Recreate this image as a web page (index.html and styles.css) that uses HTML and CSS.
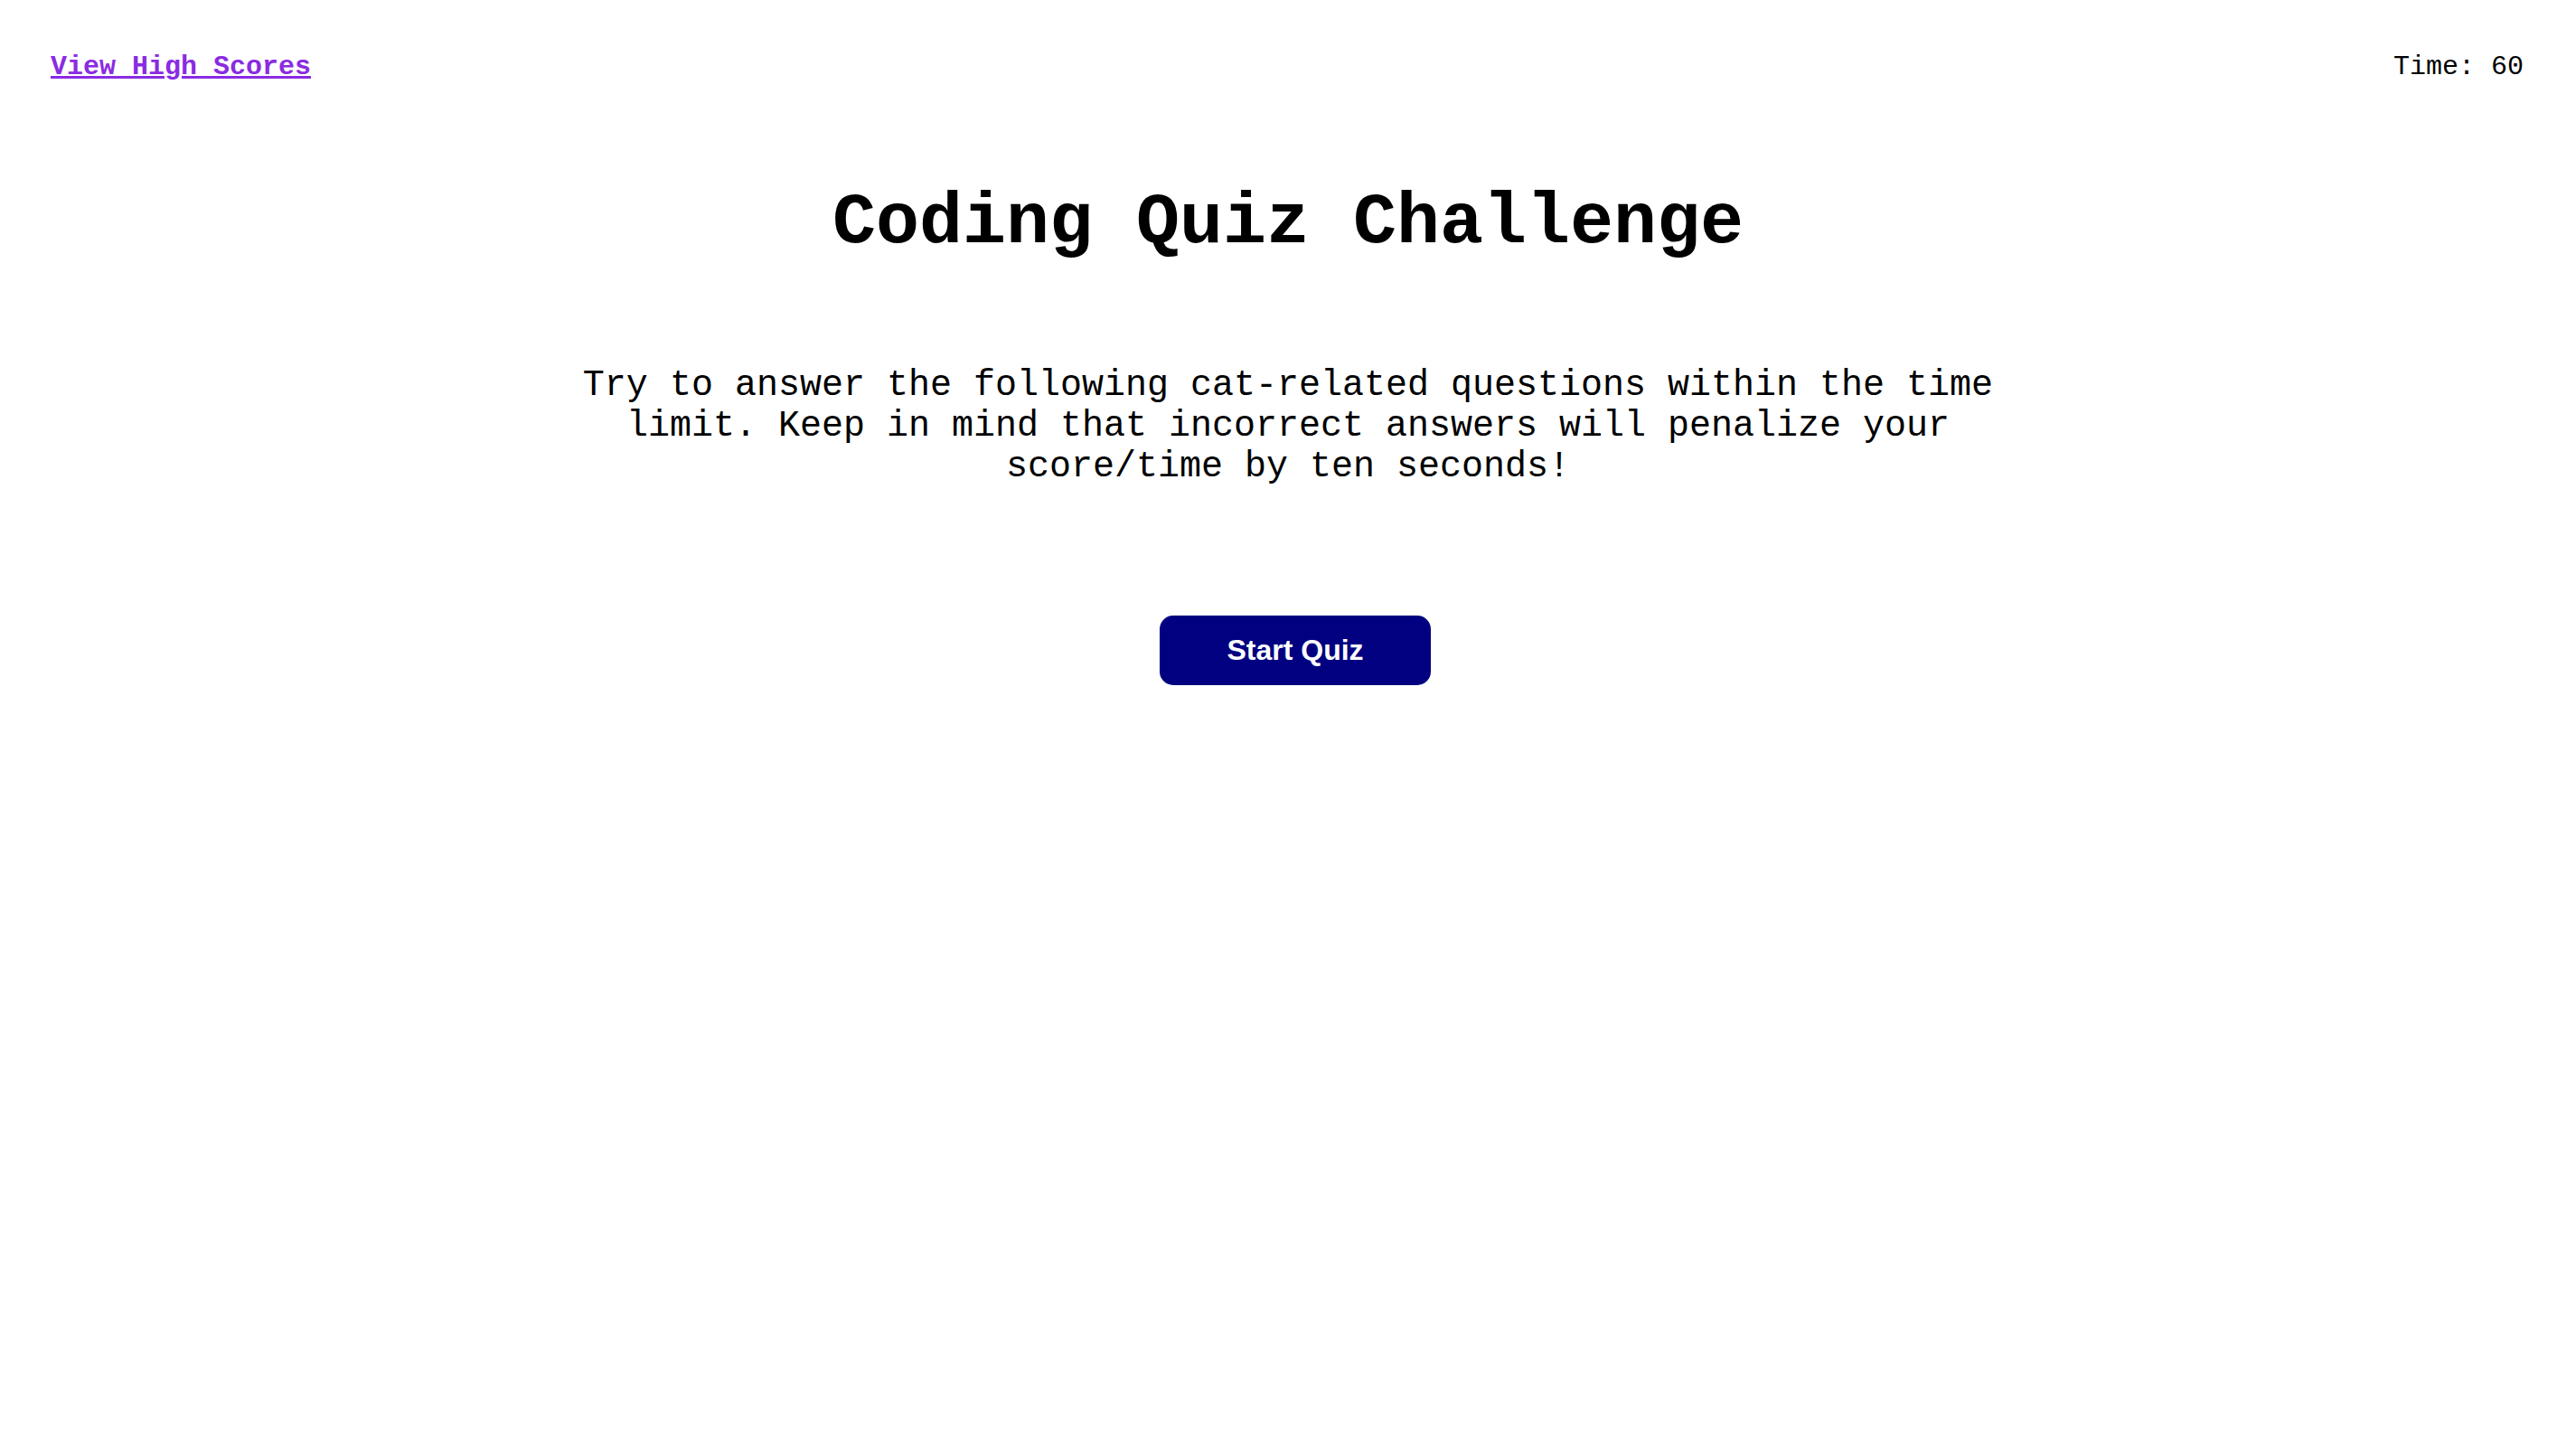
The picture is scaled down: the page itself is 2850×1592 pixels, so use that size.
FILE: index.html
```html
<!DOCTYPE html>
<html lang="en">
<head>
<meta charset="utf-8">
<title>Coding Quiz Challenge</title>
<link rel="stylesheet" href="styles.css">
</head>
<body>
<header class="top-bar">
  <a class="scores-link" href="#">View High Scores</a>
  <div class="timer">Time: 60</div>
</header>
<main class="intro">
  <h1 class="title">Coding Quiz Challenge</h1>
  <p class="description">Try to answer the following cat-related questions within the time limit. Keep in mind that incorrect answers will penalize your score/time by ten seconds!</p>
  <button class="start-btn" type="button">Start Quiz</button>
</main>
</body>
</html>
```

FILE: styles.css
```css
html, body {
  margin: 0;
  padding: 0;
  background: #ffffff;
}

body {
  font-family: "Liberation Mono", "Courier New", monospace;
  color: #000000;
}

.top-bar {
  display: flex;
  justify-content: space-between;
  align-items: flex-start;
  padding: 57px 58px 0 56px;
  font-size: 30px;
}

.scores-link {
  color: #8a2be2;
  font-weight: bold;
  text-decoration: underline;
}

.timer {
  color: #000000;
}

.intro {
  display: flex;
  flex-direction: column;
  align-items: center;
}

.title {
  margin: 110px 0 0 0;
  font-size: 80px;
  font-weight: bold;
  line-height: normal;
}

.description {
  margin: 112px 0 0 0;
  width: 1620px;
  font-size: 40px;
  line-height: 45px;
  text-align: center;
}

.start-btn {
  margin: 142px 0 0 16px;
  width: 300px;
  height: 77px;
  border: none;
  border-radius: 15px;
  background: #000080;
  color: #ffffff;
  font-family: "Liberation Sans", Arial, sans-serif;
  font-size: 32px;
  font-weight: bold;
  display: flex;
  align-items: center;
  justify-content: center;
  padding: 0;
}
```
